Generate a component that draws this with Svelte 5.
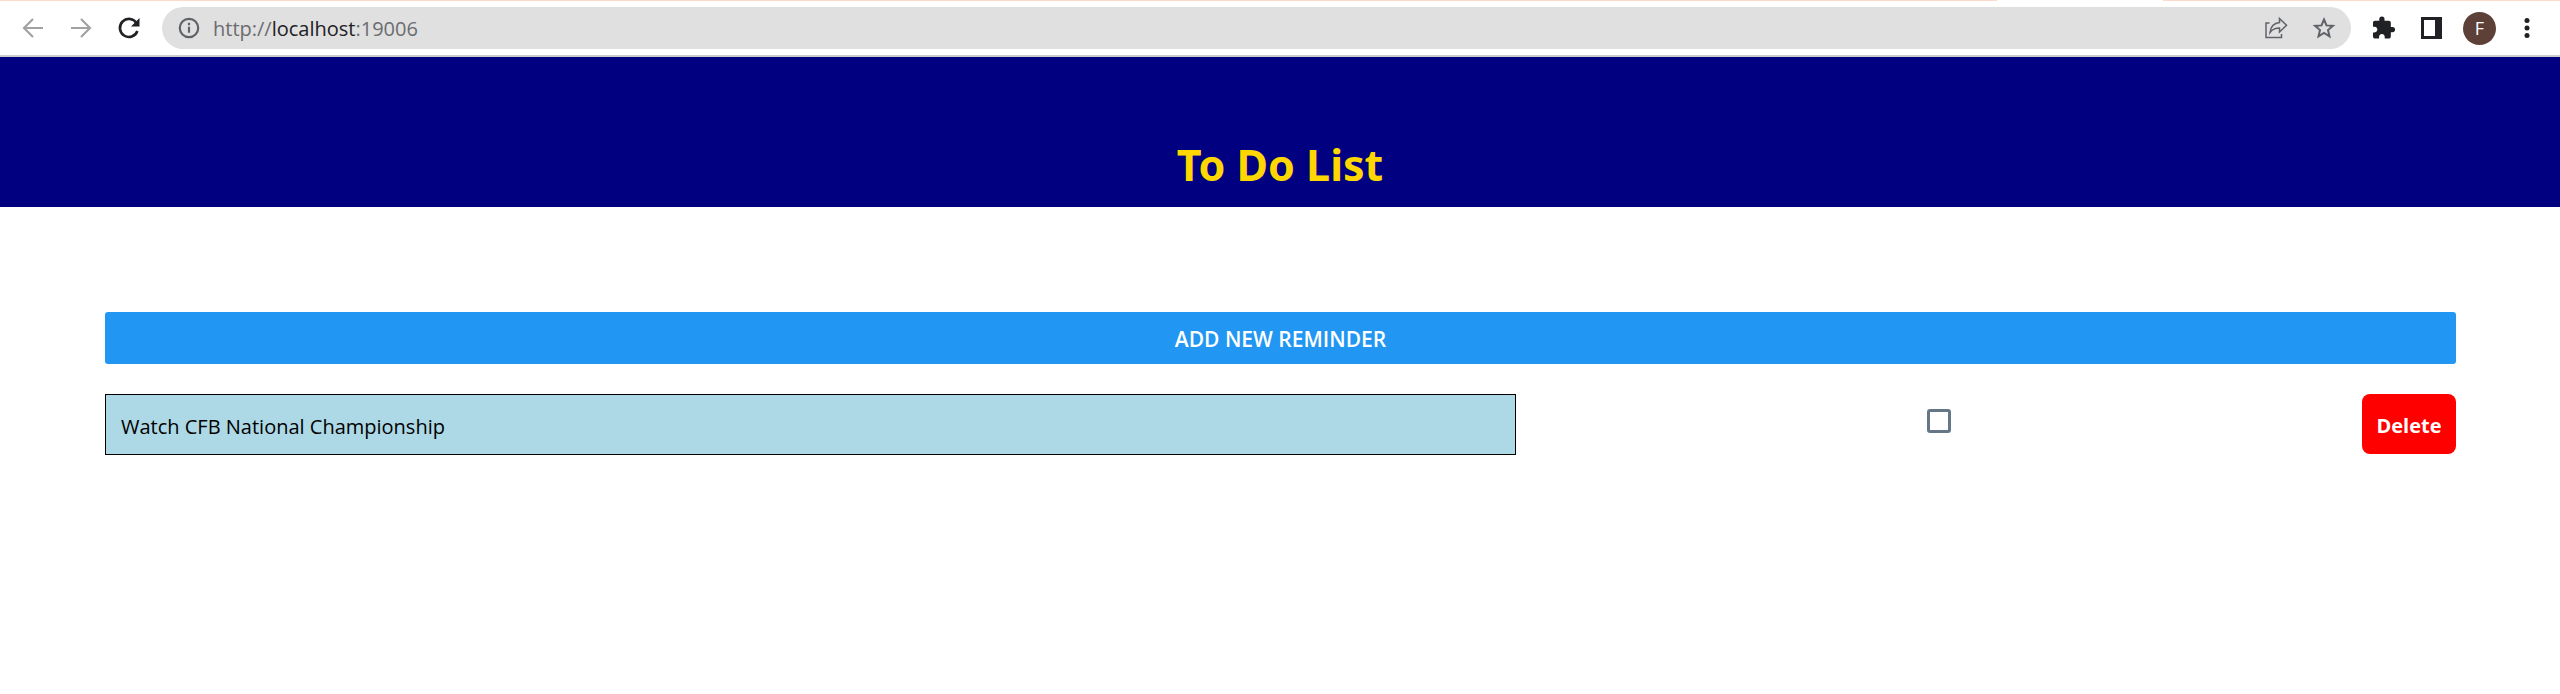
<script>
  let reminders = $state([{ id: 1, text: 'Watch CFB National Championship', done: false }]);

  function addReminder() {
    reminders.push({ id: Date.now(), text: '', done: false });
  }

  function removeReminder(id) {
    reminders = reminders.filter((item) => item.id !== id);
  }
</script>

<div class="browser">
  <div class="tab-edge"><span></span><span></span></div>
  <nav class="toolbar" aria-label="Browser toolbar">
    <button class="icon muted" aria-label="Back">
      <svg viewBox="0 0 30 30"><path d="M25 15H6M15 6l-9 9 9 9" /></svg>
    </button>
    <button class="icon muted" aria-label="Forward">
      <svg viewBox="0 0 30 30"><path d="M5 15h19M15 6l9 9-9 9" /></svg>
    </button>
    <button class="icon" aria-label="Reload">
      <svg viewBox="0 0 30 30">
        <path d="M22.6 10.2A9 9 0 1 0 23.4 18" stroke-width="2.6" />
        <path class="solid" d="M25.5 5v8.5H17z" />
      </svg>
    </button>
    <div class="address">
      <button class="icon grey" aria-label="Site information">
        <svg viewBox="0 0 30 30">
          <circle cx="15" cy="15" r="9.2" />
          <path d="M15 13.8v6M15 9.8v2.4" />
        </svg>
      </button>
      <div class="url" role="textbox" tabindex="0" aria-label="Address" contenteditable="true" spellcheck="false">http://<b>localhost</b>:19006</div>
      <button class="icon grey thin" aria-label="Share">
        <svg viewBox="0 0 30 30">
          <path d="M8.5 10H5v14.5h15.500V21" />
          <path d="M18.500 5.500l7 6.700-7 6.800v-4c-4.500 0-7 1-9.500 4.500 .6-5.500 3.500-9.300 9.500-10z" />
        </svg>
      </button>
      <button class="icon grey" aria-label="Bookmark">
        <svg viewBox="0 0 30 30">
          <path d="M15 6.500l2.500 5.900 6.400.5-4.900 4.200 1.500 6.200-5.500-3.300-5.500 3.300 1.500-6.200-4.900-4.200 6.400-.5z" stroke-width="2" />
        </svg>
      </button>
    </div>
    <button class="icon" aria-label="Extensions">
      <svg viewBox="0 0 24 24">
        <path class="solid" d="M20.500 11H19V7c0-1.100-.9-2-2-2h-4V3.500a2.500 2.500 0 0 0-5 0V5H4c-1.100 0-1.990.9-1.990 2v3.800H3.500c1.490 0 2.700 1.210 2.700 2.700s-1.210 2.700-2.700 2.700H2V20c0 1.100.9 2 2 2h3.800v-1.500c0-1.490 1.210-2.700 2.700-2.700 1.490 0 2.700 1.210 2.700 2.700V22H17c1.100 0 2-.9 2-2v-4h1.500a2.500 2.500 0 0 0 0-5z" transform="translate(1.500 1.900) scale(.84)" />
      </svg>
    </button>
    <button class="icon" aria-label="Side panel">
      <svg viewBox="0 0 30 30">
        <path class="solid" fill-rule="evenodd" d="M4 4h21v22H4zM7 7v16h11V7z" />
      </svg>
    </button>
    <button class="avatar" aria-label="Profile">F</button>
    <button class="icon" aria-label="Menu">
      <svg viewBox="0 0 30 30">
        <circle class="solid" cx="15" cy="7.500" r="2.500" />
        <circle class="solid" cx="15" cy="15" r="2.500" />
        <circle class="solid" cx="15" cy="22.500" r="2.500" />
      </svg>
    </button>
  </nav>
</div>

<header>
  <h1>To Do List</h1>
</header>

<main>
  <button class="add" onclick={addReminder}>ADD NEW REMINDER</button>
  <ul>
    {#each reminders as item (item.id)}
      <li>
        <label class="text" for="done-{item.id}">{item.text}</label>
        <input id="done-{item.id}" type="checkbox" bind:checked={item.done} />
        <button class="delete" onclick={() => removeReminder(item.id)}>Delete</button>
      </li>
    {/each}
  </ul>
</main>

<style>
  :global(body) {
    margin: 0;
    background: #fff;
    font-family: 'Open Sans', 'Noto Sans', sans-serif;
  }

  button {
    border: 0;
    padding: 0;
    background: none;
    font-family: inherit;
    cursor: pointer;
  }

  .browser {
    border-bottom: 2px solid #ccc;
    background: #fff;
  }

  .tab-edge {
    display: flex;
    justify-content: space-between;
    height: 1px;
  }

  .tab-edge span {
    width: 78%;
    background: #fdd9cb;
  }

  .tab-edge span:last-child {
    width: 15.5%;
  }

  .toolbar {
    display: flex;
    align-items: center;
    gap: 18px;
    height: 54px;
    padding: 0 18px;
  }

  .icon {
    flex: none;
    width: 30px;
    height: 30px;
    color: #202124;
  }

  .icon svg {
    display: block;
    width: 30px;
    height: 30px;
    fill: none;
    stroke: currentColor;
    stroke-width: 2.200;
  }

  .icon .solid {
    fill: currentColor;
    stroke: none;
  }

  .muted {
    color: #a1a2a4;
  }

  .grey {
    color: #5f6368;
  }

  .thin svg {
    stroke-width: 1.500;
  }

  .address {
    flex: 1;
    display: flex;
    align-items: center;
    gap: 18px;
    height: 42px;
    padding: 0 12px;
    border-radius: 21px;
    background: #e0e0e0;
  }

  .url {
    flex: 1;
    margin-left: -9px;
    padding-top: 2px;
    color: #6b6d70;
    font-size: 20px;
    line-height: 28px;
    outline: none;
  }

  .url b {
    color: #202124;
    font-weight: 400;
  }

  .avatar {
    flex: none;
    width: 33px;
    height: 33px;
    margin: 0 -2px;
    border-radius: 50%;
    background: #5d4037;
    color: #fff;
    font-size: 18px;
    line-height: 33px;
  }

  header {
    display: flex;
    align-items: flex-end;
    justify-content: center;
    box-sizing: border-box;
    height: 150px;
    padding-bottom: 12px;
    background: #000080;
  }

  h1 {
    margin: 0;
    color: #ffd700;
    font-family: 'Noto Sans', 'Open Sans', sans-serif;
    font-size: 43px;
    line-height: 60px;
    font-weight: 700;
  }

  main {
    padding: 105px 104px 0 105px;
  }

  .add {
    display: block;
    width: 100%;
    height: 52px;
    padding-top: 2px;
    border-radius: 3px;
    background: #2196f3;
    color: #fff;
    font-size: 21px;
    line-height: 28px;
    font-weight: 600;
  }

  ul {
    margin: 30px 0 0;
    padding: 0;
    list-style: none;
  }

  li {
    display: flex;
    align-items: flex-start;
    justify-content: space-between;
    margin-bottom: 15px;
  }

  .text {
    box-sizing: border-box;
    width: 60%;
    min-height: 61px;
    padding: 18px 15px 13px;
    border: 1px solid #000;
    background: #add8e6;
    color: #000;
    font-size: 20px;
    line-height: 28px;
  }

  input {
    appearance: none;
    box-sizing: border-box;
    width: 24px;
    height: 24px;
    margin: 15px 0 0;
    border: 3px solid #657786;
    border-radius: 3px;
    background: #fff;
  }

  input:checked {
    background: #657786;
  }

  .delete {
    min-width: 94px;
    height: 60px;
    padding: 3px 14px 0;
    border-radius: 8px;
    background: #f00;
    color: #fff;
    font-size: 20px;
    line-height: 28px;
    font-weight: 700;
  }
</style>
